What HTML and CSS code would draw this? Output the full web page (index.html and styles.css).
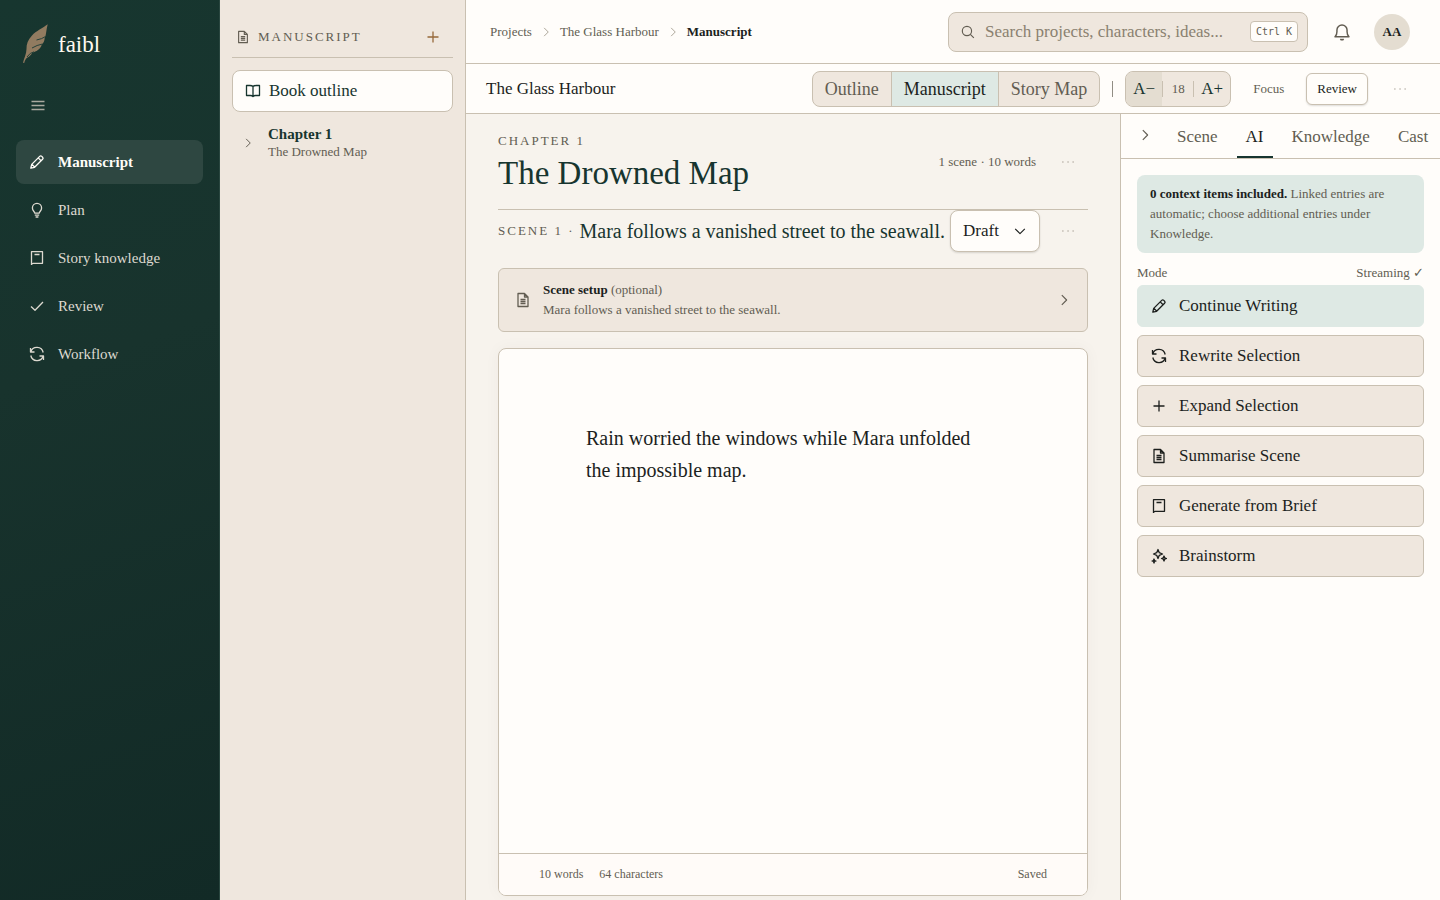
FILE: index.html
```html
<!DOCTYPE html>
<html lang="en">
<head>
<meta charset="utf-8">
<meta name="viewport" content="width=device-width, initial-scale=1">
<title>The Glass Harbour – faibl</title>
<link rel="stylesheet" href="styles.css">
</head>
<body>
<svg class="sprite" aria-hidden="true">
  <symbol id="pencil" viewBox="0 0 16 16"><path d="M1.800 14.200l.9-3.800 8-8a1.500 1.500 0 0 1 2.100 0l.8.8a1.500 1.500 0 0 1 0 2.100l-8 8zM9.200 3.900l2.900 2.900M3 10.400l2.600 2.600"/></symbol>
  <symbol id="bulb" viewBox="0 0 16 16"><path d="M5.800 11.200c0-1.400-2.400-2.400-2.400-5.300a4.600 4.600 0 0 1 9.200 0c0 2.900-2.400 3.900-2.400 5.300zM5.800 13.200h4.400M6.600 15h2.800"/></symbol>
  <symbol id="book" viewBox="0 0 16 16"><path d="M2.500 15V1.700h11v11.600h-9.400q-1.600 0-1.600 1.700M5.500 4.500h5"/></symbol>
  <symbol id="check" viewBox="0 0 16 16"><path d="M2 8.500l4 3.700L14 4"/></symbol>
  <symbol id="refresh" viewBox="0 0 16 16"><path d="M1.500 2v4h4M1.800 6A6.400 6.400 0 0 1 14.200 6.500M14.500 14v-4h-4M14.200 10A6.400 6.400 0 0 1 1.800 9.500"/></symbol>
  <symbol id="doc" viewBox="0 0 16 16"><path d="M3 1.500h6.500l3.500 3.500v9.500h-10zM9.500 1.500v3.500h3.500M5.500 7.500h5M5.500 9.500h5M5.500 11.500h5"/></symbol>
  <symbol id="open-book" viewBox="0 0 16 16"><path d="M8 3.500Q7 2.500 5 2.500H1.500v10H5.500q1.700 0 2.500 1 .8-1 2.500-1h4v-10H11q-2 0-3 1zM8 3.500v10"/></symbol>
  <symbol id="plus" viewBox="0 0 16 16"><path d="M8 2.500v11M2.500 8h11"/></symbol>
  <symbol id="chevron" viewBox="0 0 16 16"><path d="M5.500 2.500L11 8l-5.500 5.500"/></symbol>
  <symbol id="menu" viewBox="0 0 16 16"><path d="M1.500 3.500h13M1.500 7.500h13M1.500 11.500h13"/></symbol>
  <symbol id="search" viewBox="0 0 16 16"><circle cx="6.800" cy="6.800" r="5.300"/><path d="M10.700 10.700l4 4"/></symbol>
  <symbol id="bell" viewBox="0 0 16 16"><path d="M1.800 12.300h12.400q-1.700-1.600-1.700-4.500V6.200a4.500 4.500 0 0 0-9 0v1.600q0 2.900-1.700 4.500zM6.500 14.300q1.500 1.200 3 0"/></symbol>
  <symbol id="sparkles" viewBox="0 0 16 16"><path d="M7 1.500l1.300 3.200L11.500 6 8.300 7.300 7 10.500 5.700 7.300 2.500 6l3.200-1.300zM13 8l.7 1.800 1.800.7-1.800.7-.7 1.800-.7-1.800-1.800-.7 1.800-.7zM3 11l.5 1.500 1.500.5-1.500.5L3 15l-.5-1.500L1 13l1.500-.5z"/></symbol>
  <symbol id="dots" viewBox="0 0 16 16"><path d="M1.500 8h1.300M7.400 8h1.300M13.200 8h1.300"/></symbol>
</svg>
<div class="app">
  <aside class="sidebar">
    <a class="brand" href="#">
      <svg class="feather" viewBox="0 0 28 42" aria-hidden="true">
        <path d="M25.700 1.300C21 5 14 8 10 12.500 6 17 4.300 21 4.500 26 4.500 31 2 35 1 39.700l1.200.2C3 37 4 35.500 5.500 34.500 7.500 33.500 9 32 10.500 29.500 14 28.500 18.500 26.500 19.700 21.700c2-1.700 2.800-3.700 3-6.700C24.500 12 24 7 25.700 1.300z"/>
        <path class="rib" d="M23.500 13.500Q20 16 14.500 17M20.500 21Q15 22 10 25M12 28.800Q8 29.500 5 34"/>
      </svg>
      <span>faibl</span>
    </a>
    <button class="menu" aria-label="Collapse menu"><svg class="icon"><use href="#menu"/></svg></button>
    <nav class="nav">
      <a class="active" href="#"><svg class="icon"><use href="#pencil"/></svg>Manuscript</a>
      <a href="#"><svg class="icon"><use href="#bulb"/></svg>Plan</a>
      <a href="#"><svg class="icon"><use href="#book"/></svg>Story knowledge</a>
      <a href="#"><svg class="icon"><use href="#check"/></svg>Review</a>
      <a href="#"><svg class="icon"><use href="#refresh"/></svg>Workflow</a>
    </nav>
  </aside>

  <aside class="binder">
    <header class="binder-head">
      <svg class="icon small"><use href="#doc"/></svg>
      <h2>Manuscript</h2>
      <button class="add" aria-label="Add chapter"><svg class="icon"><use href="#plus"/></svg></button>
    </header>
    <button class="outline"><svg class="icon"><use href="#open-book"/></svg>Book outline</button>
    <a class="chapter" href="#">
      <svg class="icon tiny"><use href="#chevron"/></svg>
      <span><strong>Chapter 1</strong><small>The Drowned Map</small></span>
    </a>
  </aside>

  <div class="workspace">
    <header class="topbar">
      <nav class="crumbs" aria-label="Breadcrumb">
        <a href="#">Projects</a><svg class="icon tiny"><use href="#chevron"/></svg>
        <a href="#">The Glass Harbour</a><svg class="icon tiny"><use href="#chevron"/></svg>
        <strong>Manuscript</strong>
      </nav>
      <label class="search">
        <svg class="icon small"><use href="#search"/></svg>
        <input type="search" aria-label="Search" placeholder="Search projects, characters, ideas...">
        <kbd>Ctrl K</kbd>
      </label>
      <button class="bell" aria-label="Notifications"><svg class="icon large"><use href="#bell"/></svg></button>
      <button class="avatar">AA</button>
    </header>

    <div class="toolbar">
      <h1>The Glass Harbour</h1>
      <div class="segments">
        <button>Outline</button><button class="active">Manuscript</button><button>Story Map</button>
      </div>
      <span class="rule"></span>
      <div class="sizer">
        <button class="pressed">A−</button><span>18</span><button>A+</button>
      </div>
      <button class="focus">Focus</button>
      <button class="review">Review</button>
      <button class="more" aria-label="More"><svg class="icon small"><use href="#dots"/></svg></button>
    </div>

    <div class="columns">
      <main class="editor">
        <header class="chapter-head">
          <div class="chapter-title">
            <p class="eyebrow">Chapter 1</p>
            <h2>The Drowned Map</h2>
          </div>
          <span class="stats">1 scene · 10 words</span>
          <button class="more" aria-label="Chapter actions"><svg class="icon small"><use href="#dots"/></svg></button>
        </header>
        <div class="scene-head">
          <p class="eyebrow">Scene 1 <span>·</span></p>
          <h3>Mara follows a vanished street to the seawall.</h3>
          <div class="status">
            <select aria-label="Scene status"><option>Draft</option></select>
            <svg class="icon small"><use href="#chevron"/></svg>
          </div>
          <button class="more" aria-label="Scene actions"><svg class="icon small"><use href="#dots"/></svg></button>
        </div>
        <button class="setup">
          <svg class="icon"><use href="#doc"/></svg>
          <span class="setup-text"><span><strong>Scene setup</strong> (optional)</span><span>Mara follows a vanished street to the seawall.</span></span>
          <svg class="icon small"><use href="#chevron"/></svg>
        </button>
        <article class="paper">
          <div class="prose"><p>Rain worried the windows while Mara unfolded the impossible map.</p></div>
          <footer><span>10 words</span><span>64 characters</span><span class="saved">Saved</span></footer>
        </article>
      </main>

      <aside class="assistant">
        <div class="tabs">
          <button class="collapse" aria-label="Collapse panel"><svg class="icon small"><use href="#chevron"/></svg></button>
          <button>Scene</button><button class="active">AI</button><button>Knowledge</button><button>Cast</button>
        </div>
        <div class="assistant-body">
          <p class="note"><strong>0 context items included.</strong> Linked entries are automatic; choose additional entries under Knowledge.</p>
          <div class="mode"><span>Mode</span><span>Streaming ✓</span></div>
          <div class="actions">
            <button class="active"><svg class="icon"><use href="#pencil"/></svg>Continue Writing</button>
            <button><svg class="icon"><use href="#refresh"/></svg>Rewrite Selection</button>
            <button><svg class="icon"><use href="#plus"/></svg>Expand Selection</button>
            <button><svg class="icon"><use href="#doc"/></svg>Summarise Scene</button>
            <button><svg class="icon"><use href="#book"/></svg>Generate from Brief</button>
            <button><svg class="icon"><use href="#sparkles"/></svg>Brainstorm</button>
          </div>
        </div>
      </aside>
    </div>
  </div>
</div>
</body>
</html>
```

FILE: styles.css
```css
:root {
  --ink: #1c1f1d;
  --green: #17352f;
  --muted: #625d52;
  --line: #c9c0b1;
  --sand: #efe7de;
  --stone: #e4ddd1;
  --mint: #dee9e4;
  --page: #f7f3ed;
  --white: #fffdfa;
}
* { box-sizing: border-box; }
body {
  margin: 0;
  background: var(--white);
  color: var(--ink);
  font-family: "Palatino Linotype", "Book Antiqua", "Liberation Serif", serif;
  font-size: 17px;
  line-height: 20px;
}
h1, h2, h3, p { margin: 0; font-weight: 400; }
button, input, select { font: inherit; color: inherit; }
button { border: 0; padding: 0; background: none; cursor: pointer; white-space: nowrap; }
a { color: inherit; text-decoration: none; }
.sprite { position: absolute; width: 0; height: 0; }
.icon {
  flex: none;
  width: 16px;
  height: 16px;
  fill: none;
  stroke: currentColor;
  stroke-width: 1.3;
  stroke-linejoin: round;
}
.icon.small { width: 14px; height: 14px; }
.icon.tiny { width: 12px; height: 12px; }
.icon.large { width: 18px; height: 18px; }

.app { display: grid; grid-template-columns: 220px 246px minmax(0, 1fr); min-height: 100vh; }

.sidebar {
  padding: 20px 16px;
  border-right: 1px solid #29463f;
  background: linear-gradient(160deg, #17362f, #18332d 40%, #122a26);
  color: #ddd9d0;
}
.brand { display: flex; align-items: center; gap: 8px; padding-left: 6px; color: #fffaf0; font-size: 23px; line-height: 44px; }
.brand span { padding-top: 3px; }
.feather { width: 28px; height: 42px; fill: #917b60; }
.rib { fill: none; stroke: #24413a; stroke-width: 1; }
.menu { display: flex; align-items: center; width: 44px; height: 44px; margin: 17px 0 12px; padding-left: 14px; color: #a9a99f; }
.nav { display: grid; gap: 4px; font-size: 15px; }
.nav a { display: flex; align-items: center; gap: 13px; height: 44px; padding: 0 13px; border-radius: 8px; }
.nav .active { background: #2e4741; color: #fffdf8; font-weight: 700; }

.binder { padding: 16px 12px; border-right: 1px solid var(--line); background: var(--sand); }
.binder-head { display: flex; align-items: center; gap: 8px; height: 42px; padding: 0 12px 0 4px; border-bottom: 1px solid var(--line); color: var(--muted); }
.binder-head h2 { flex: 1; font-size: 13px; letter-spacing: 2px; text-transform: uppercase; }
.add { color: #96693a; display: flex; }
.outline { display: flex; align-items: center; gap: 8px; width: 100%; height: 42px; margin: 12px 0; padding: 0 12px; border: 1px solid var(--line); border-radius: 8px; background: var(--white); color: var(--green); }
.chapter { display: flex; align-items: center; gap: 14px; padding: 1px 10px; color: var(--muted); }
.chapter strong, .chapter small { display: block; line-height: 18px; }
.chapter strong { color: var(--green); font-size: 15px; }
.chapter small { font-size: 13px; }

.workspace { display: flex; flex-direction: column; }
.topbar { display: flex; align-items: center; height: 64px; padding: 0 30px 0 24px; border-bottom: 1px solid var(--line); }
.crumbs { display: flex; flex: 1; align-items: center; gap: 8px; color: var(--muted); font-size: 13px; white-space: nowrap; }
.crumbs .icon { color: #aaa397; }
.crumbs strong { color: var(--ink); }
.search { display: flex; align-items: center; gap: 10px; width: 360px; height: 40px; padding: 0 9px 0 12px; border: 1px solid var(--line); border-radius: 8px; background: var(--sand); color: var(--muted); }
.search input { flex: 1; min-width: 0; padding: 0; border: 0; outline: 0; background: none; }
.search input::placeholder { color: #8a8170; opacity: 1; }
kbd { padding: 0 5px; border: 1px solid var(--line); border-radius: 4px; background: var(--white); font: 10px/19px "DejaVu Sans Mono", monospace; }
.bell { display: flex; margin: 0 23px 0 25px; color: var(--muted); }
.avatar { width: 36px; height: 36px; border-radius: 50%; background: var(--stone); font-size: 13px; font-weight: 700; }

.toolbar { display: flex; align-items: center; gap: 12px; height: 50px; padding: 0 20px; border-bottom: 1px solid var(--line); }
.toolbar h1 { flex: 1; font-size: 17px; }
.segments, .sizer { display: flex; height: 36px; overflow: hidden; border: 1px solid var(--line); border-radius: 8px; background: var(--sand); color: var(--muted); }
.segments { font-size: 18px; }
.segments button { padding: 0 12px; }
.segments button + button { border-left: 1px solid var(--line); }
.segments .active { background: var(--mint); color: var(--ink); }
.rule { width: 1px; height: 16px; background: #918d84; }
.sizer { align-items: center; }
.sizer button { width: 36px; height: 100%; color: var(--green); }
.sizer .pressed { background: var(--stone); }
.sizer span { width: 32px; border: solid var(--line); border-width: 0 1px; font-size: 13px; line-height: 16px; text-align: center; }
.focus, .review { font-size: 13px; height: 32px; padding: 0 10px; }
.focus { color: var(--muted); }
.review { border: 1px solid var(--line); border-radius: 6px; background: var(--white); box-shadow: 0 1px 2px #0002; }
.more { display: flex; align-items: center; justify-content: center; width: 40px; height: 40px; color: #8d877b; }

.columns { display: grid; flex: 1; grid-template-columns: minmax(0, 1fr) 320px; }
.editor { display: flex; flex-direction: column; padding: 0 32px 4px; background: var(--page); }
.eyebrow { color: var(--muted); font-size: 13px; letter-spacing: 2px; text-transform: uppercase; white-space: nowrap; }
.chapter-head { display: flex; align-items: center; gap: 12px; height: 96px; border-bottom: 1px solid var(--line); }
.chapter-title { flex: 1; padding-top: 2px; }
.chapter-title h2 { color: var(--green); font-size: 33px; line-height: 44px; }
.stats { color: var(--muted); font-size: 13px; }
.scene-head { display: flex; align-items: center; height: 42px; }
.scene-head h3 { flex: 1; margin-left: 5px; color: var(--green); font-size: 20px; white-space: nowrap; }
.status { position: relative; margin-right: 8px; }
.status select { display: block; width: 90px; height: 42px; padding: 0 12px; appearance: none; border: 1px solid var(--line); border-radius: 8px; background: var(--white); box-shadow: 0 1px 2px #0002; }
.status .icon { position: absolute; top: 14px; right: 13px; transform: rotate(90deg); pointer-events: none; }
.setup { display: flex; align-items: center; gap: 12px; min-height: 64px; margin: 16px 0; padding: 0 16px; border: 1px solid var(--line); border-radius: 6px; background: var(--sand); color: var(--muted); font-size: 13px; text-align: left; }
.setup-text { display: grid; flex: 1; }
.setup strong { color: var(--ink); }
.paper { display: flex; flex: 1; flex-direction: column; border: 1px solid var(--line); border-radius: 8px; background: var(--white); box-shadow: 0 0 16px #4b38200a; overflow: hidden; }
.prose { flex: 1; padding: 73px 87px; font-size: 20px; line-height: 32px; }
.prose p { max-width: 400px; }
.paper footer { display: flex; gap: 16px; padding: 10px 40px 11px; border-top: 1px solid var(--line); background: #fffbf8; color: var(--muted); font-size: 12px; }
.saved { margin-left: auto; }

.assistant { border-left: 1px solid var(--line); background: var(--white); }
.tabs { display: flex; gap: 10px; height: 45px; padding-right: 3px; border-bottom: 1px solid var(--line); color: var(--muted); }
.tabs button { padding: 3px 9px 0; border-bottom: 2px solid transparent; }
.tabs .active { border-color: var(--green); color: var(--ink); }
.tabs .collapse { display: flex; align-items: center; padding: 0 0 0 17px; margin-right: 6px; }
.assistant-body { padding: 16px; }
.note { padding: 9px 13px; border-radius: 8px; background: var(--mint); color: var(--muted); font-size: 13px; }
.note strong { color: var(--ink); }
.mode { display: flex; justify-content: space-between; margin: 10px 0 2px; color: var(--muted); font-size: 13px; }
.actions { display: grid; gap: 8px; }
.actions button { display: flex; align-items: center; gap: 12px; height: 42px; padding: 0 13px; border: 1px solid var(--line); border-radius: 6px; background: var(--sand); }
.actions .active { border-color: var(--mint); background: var(--mint); }
```
